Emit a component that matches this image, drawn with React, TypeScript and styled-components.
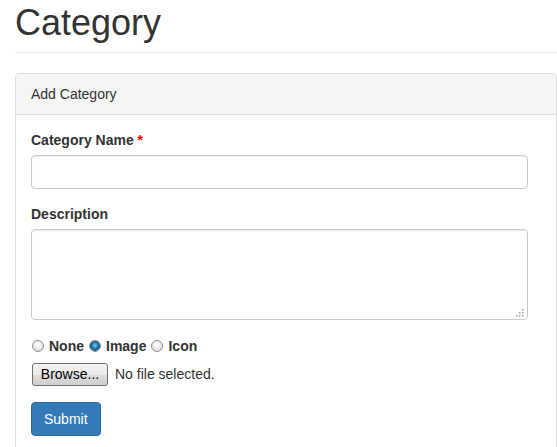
import React from "react";
import styled, { createGlobalStyle } from "styled-components";

const GlobalStyle = createGlobalStyle`
  html, body { margin: 0; padding: 0; background: #fff; overflow: hidden; }
  body {
    font-family: "Liberation Sans", Arial, Helvetica, sans-serif;
    font-size: 14px;
    line-height: 1.42857143;
    color: #333;
  }
  * { box-sizing: border-box; }
`;

const Page = styled.div`
  margin-left: 15px;
  width: 542px;
`;

const PageHeader = styled.div`
  padding-bottom: 9px;
  border-bottom: 1px solid #eee;
  margin-bottom: 20px;
`;

const Title = styled.h1`
  margin: 3px 0 0;
  font-size: 36px;
  font-weight: 500;
  line-height: 1.1;
  color: #333;
`;

const Panel = styled.div`
  border: 1px solid #ddd;
  border-radius: 4px;
  background: #fff;
`;

const PanelHeading = styled.div`
  padding: 10px 15px;
  background: #f5f5f5;
  border-bottom: 1px solid #ddd;
  border-top-left-radius: 3px;
  border-top-right-radius: 3px;
`;

const PanelBody = styled.div`
  padding: 15px;
`;

const Form = styled.form`
  width: 497px;
`;

const FormGroup = styled.div`
  margin-bottom: 15px;
`;

const Label = styled.label`
  display: inline-block;
  margin-bottom: 5px;
  font-weight: bold;
`;

const Required = styled.span`
  color: #f00;
`;

const Input = styled.input`
  display: block;
  width: 100%;
  height: 34px;
  padding: 6px 12px;
  font: inherit;
  border: 1px solid #ccc;
  border-radius: 4px;
  box-shadow: inset 0 1px 1px rgba(0, 0, 0, 0.075);
  outline: none;
`;

const TextAreaWrap = styled.div`
  position: relative;
`;

const TextArea = styled.textarea`
  display: block;
  width: 100%;
  height: 91px;
  padding: 6px 12px;
  font: inherit;
  border: 1px solid #ccc;
  border-radius: 4px;
  box-shadow: inset 0 1px 1px rgba(0, 0, 0, 0.075);
  resize: none;
  outline: none;
`;

const Grip = styled.svg`
  position: absolute;
  right: 4px;
  bottom: 3px;
`;

const RadioRow = styled.div`
  display: flex;
  align-items: center;
  height: 20px;
  padding-left: 1px;
  margin-top: 16px;
  margin-bottom: 7px;
`;

const RadioLabel = styled.label`
  display: inline-flex;
  align-items: center;
  font-weight: bold;
  margin-right: 5px;
`;

const Radio = styled.input`
  appearance: none;
  -webkit-appearance: none;
  width: 12px;
  height: 12px;
  margin: 1px 5px 0 0;
  border-radius: 50%;
  border: 1px solid #8f8f8f;
  background: radial-gradient(circle at 50% 35%, #ffffff 0%, #e9e9e9 55%, #d2d2d2 100%);
  &:checked {
    background:
      radial-gradient(circle at 50% 45%, #7cc6ee 0%, #1d7fb8 40%, #174f77 68%, transparent 72%),
      radial-gradient(circle at 50% 35%, #ffffff 0%, #e9e9e9 55%, #d2d2d2 100%);
  }
`;

const FileRow = styled.div`
  display: flex;
  align-items: center;
  height: 23px;
  margin-bottom: 16px;
`;

const BrowseButton = styled.button`
  width: 76px;
  height: 23px;
  margin-left: 1px;
  padding: 0;
  font-family: "Liberation Sans", Arial, sans-serif;
  font-size: 14px;
  color: #000;
  border: 1px solid #707070;
  border-radius: 3px;
  background: linear-gradient(to bottom, #f2f2f2 0%, #ebebeb 50%, #dddddd 51%, #cfcfcf 100%);
`;

const FileText = styled.span`
  margin-left: 7px;
  color: #333;
`;

const SubmitButton = styled.button`
  display: inline-block;
  height: 34px;
  padding: 6px 12px;
  font-family: "Liberation Sans", Arial, sans-serif;
  font-size: 14px;
  line-height: 1.42857143;
  color: #fff;
  background: #337ab7;
  border: 1px solid #2e6da4;
  border-radius: 4px;
`;

function ResizeGrip() {
  const dots: Array<[number, number]> = [
    [6, 0],
    [3, 3], [6, 3],
    [0, 6], [3, 6], [6, 6],
  ];
  return (
    <Grip width="8" height="8" viewBox="0 0 8 8">
      {dots.map(([x, y], i) => (
        <rect key={i} x={x} y={y} width="1.5" height="1.5" fill="#a0a0a0" />
      ))}
    </Grip>
  );
}

export default function App() {
  return (
    <>
      <GlobalStyle />
      <Page>
        <PageHeader>
          <Title>Category</Title>
        </PageHeader>
        <Panel>
          <PanelHeading>Add Category</PanelHeading>
          <PanelBody>
            <Form onSubmit={(e) => e.preventDefault()}>
              <FormGroup>
                <Label>
                  Category Name <Required>*</Required>
                </Label>
                <Input type="text" />
              </FormGroup>
              <div>
                <Label>Description</Label>
                <TextAreaWrap>
                  <TextArea />
                  <ResizeGrip />
                </TextAreaWrap>
              </div>
              <RadioRow>
                <RadioLabel>
                  <Radio type="radio" name="kind" />
                  None
                </RadioLabel>
                <RadioLabel>
                  <Radio type="radio" name="kind" defaultChecked />
                  Image
                </RadioLabel>
                <RadioLabel>
                  <Radio type="radio" name="kind" />
                  Icon
                </RadioLabel>
              </RadioRow>
              <FileRow>
                <BrowseButton type="button">Browse...</BrowseButton>
                <FileText>No file selected.</FileText>
              </FileRow>
              <SubmitButton type="submit">Submit</SubmitButton>
            </Form>
          </PanelBody>
        </Panel>
      </Page>
    </>
  );
}
